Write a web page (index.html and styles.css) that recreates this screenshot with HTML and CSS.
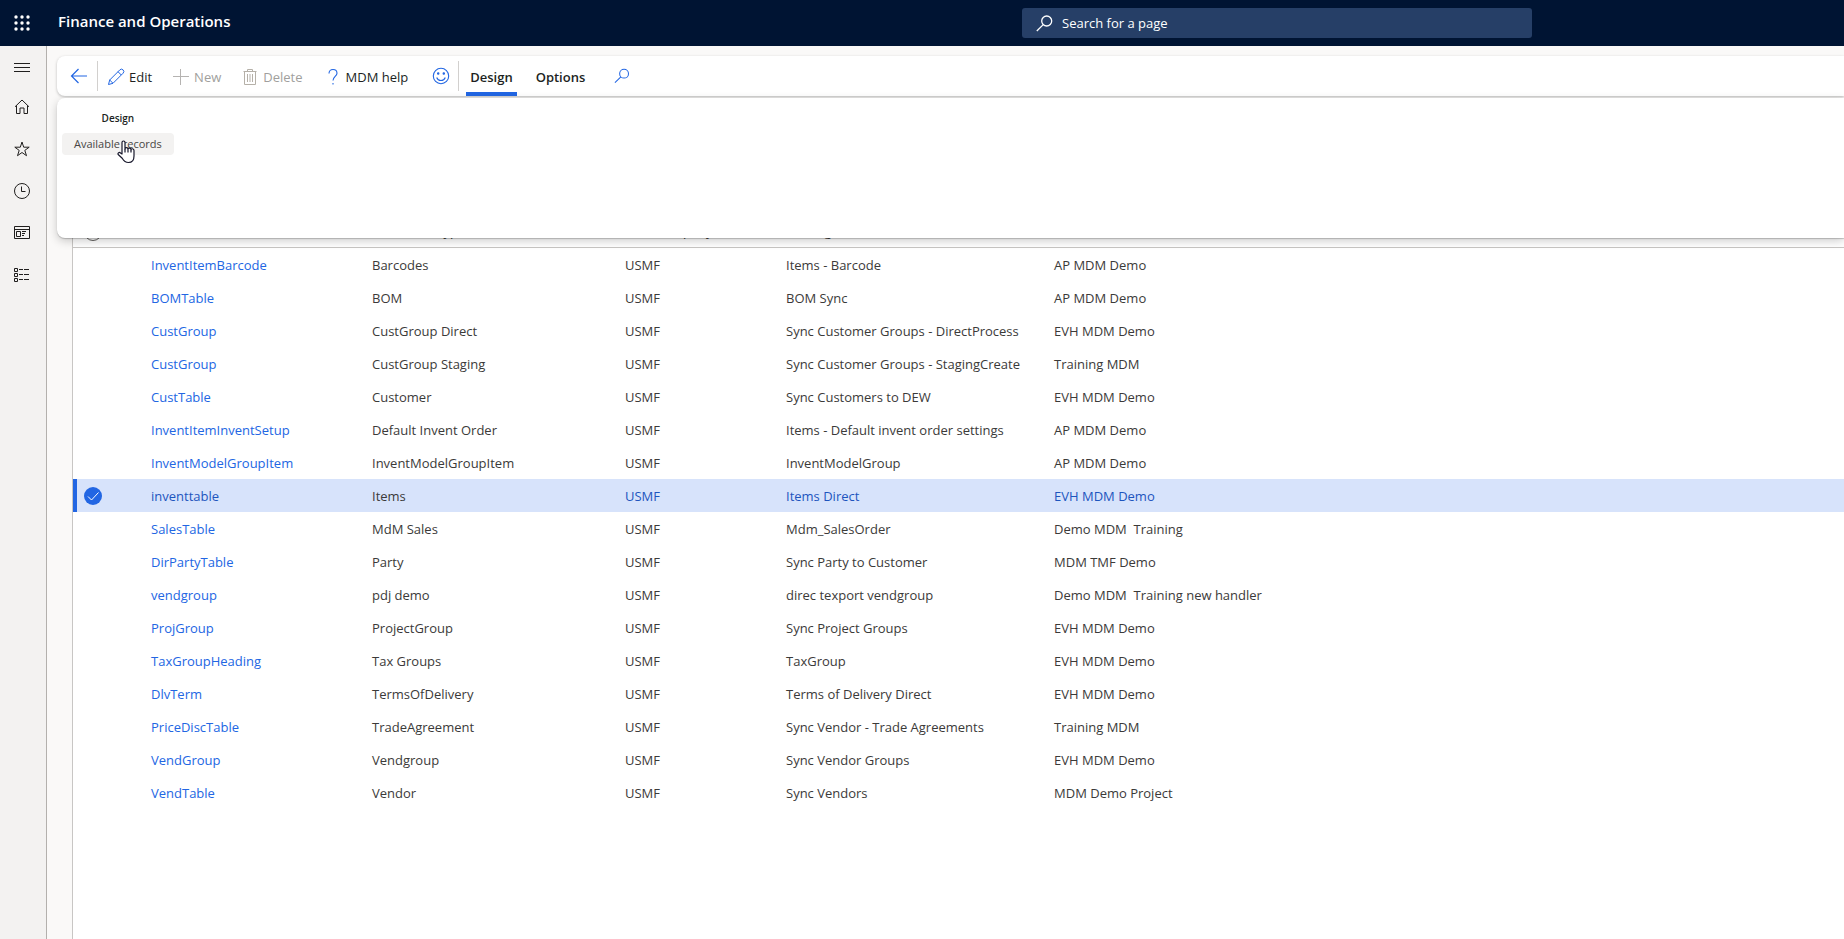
FILE: index.html
```html
<!DOCTYPE html>
<html lang="en">
<head>
<meta charset="utf-8">
<title>Finance and Operations</title>
<link rel="stylesheet" href="styles.css">
</head>
<body>
<header class="topbar">
  <button class="icon-button launcher" aria-label="App launcher">
    <svg width="16" height="16" viewBox="0 0 16 16" fill="currentColor"><circle cx="2" cy="2" r="1.7"/><circle cx="8" cy="2" r="1.7"/><circle cx="14" cy="2" r="1.7"/><circle cx="2" cy="8" r="1.7"/><circle cx="8" cy="8" r="1.7"/><circle cx="14" cy="8" r="1.7"/><circle cx="2" cy="14" r="1.7"/><circle cx="8" cy="14" r="1.7"/><circle cx="14" cy="14" r="1.7"/></svg>
  </button>
  <h1 class="brand">Finance and Operations</h1>
  <label class="search">
    <svg width="17" height="17" viewBox="0 0 17 17" fill="none" stroke="currentColor" stroke-width="1.3"><circle cx="10.7" cy="6" r="5"/><path d="M7.2 9.6L.8 16"/></svg>
    <input class="search-input" type="text" placeholder="Search for a page" aria-label="Search for a page">
  </label>
</header>
<div class="shell">
  <nav class="rail">
    <button class="icon-button menu" aria-label="Expand the navigation pane"><svg width="18" height="18" viewBox="0 0 18 18" fill="none" stroke="currentColor"><path d="M1 6.5h16M1 10.5h16M1 14.5h16"/></svg></button>
    <button class="icon-button" aria-label="Home"><svg width="18" height="18" viewBox="0 0 18 18" fill="none" stroke="currentColor"><path d="M2 8.8L9 2l7 6.800M3.500 7.500v8h3.500v-5.500h4v5.500h3.500v-8"/></svg></button>
    <button class="icon-button" aria-label="Favorites"><svg width="18" height="18" viewBox="0 0 18 18" fill="none" stroke="currentColor"><path d="M9 2l1.700 5.200h5.500l-4.400 3.200 1.700 5.300L9 12.500l-4.500 3.200 1.700-5.300-4.400-3.200h5.500z"/></svg></button>
    <button class="icon-button" aria-label="Recent"><svg width="18" height="18" viewBox="0 0 18 18" fill="none" stroke="currentColor"><circle cx="9" cy="9" r="7.500"/><path d="M8.500 4.500v5h4"/></svg></button>
    <button class="icon-button" aria-label="Workspaces"><svg width="18" height="18" viewBox="0 0 18 18" fill="none" stroke="currentColor"><path d="M1.500 2.500h15v12h-15zM1.500 5.500h15M3.500 7.500h4v5h-4zM9 7.500h4M9 9.500h3M9 11.500h2"/></svg></button>
    <button class="icon-button" aria-label="Modules"><svg width="18" height="18" viewBox="0 0 18 18" fill="none" stroke="currentColor"><path d="M1.500 2.500h3v3h-3zM1.500 7.500h3v3h-3zM1.500 12.500h3v3h-3zM6 3.500h4M11 3.500h5M6 8.500h4M11 8.500h5M6 13.500h4M11 13.500h5"/></svg></button>
  </nav>
  <main class="content">
    <div class="toolbar">
      <button class="tool back" aria-label="Back"><svg width="18" height="18" viewBox="0 0 18 18" fill="none" stroke="currentColor" stroke-width="1.200"><path d="M17 9H1.500M8.500 2L1.500 9l7 7"/></svg></button>
      <span class="divider"></span>
      <button class="tool edit"><svg width="18" height="18" viewBox="0 0 18 18" fill="none" stroke="#2266e3"><path d="M1.500 16.500l1.200-4.500L12.800 1.900a1.900 1.900 0 0 1 3.300 3.300L6 15.300zM11 3.700l3.300 3.300M2.700 12L6 15.300"/></svg>Edit</button>
      <button class="tool new" disabled><svg width="18" height="18" viewBox="0 0 18 18" fill="none" stroke="#b5b3b1"><path d="M1 8.500h16M8.500 1v16"/></svg>New</button>
      <button class="tool delete" disabled><svg width="18" height="18" viewBox="0 0 18 18" fill="none" stroke="#b5b0a8"><path d="M2.500 3.500h13M6.500 3.500v-2h5v2M3.500 3.500v13h11v-13M6.500 6v8M9 6v8M11.500 6v8"/></svg>Delete</button>
      <button class="tool help"><svg width="18" height="18" viewBox="0 0 18 18" fill="none" stroke="#2266e3" stroke-width="1.100"><path d="M5 5.500C5 3 6.500 1.500 9 1.500s4 1.500 4 3.700c0 3-4 3.600-4 7.300M9 15v1.500"/></svg>MDM help</button>
      <button class="tool smile" aria-label="Feedback"><svg width="18" height="18" viewBox="0 0 18 18" fill="none" stroke="#2266e3" stroke-width="1.100"><circle cx="9" cy="9" r="7.700"/><path d="M4.700 10.500c1.500 4 7 4 8.600 0"/><circle cx="6.200" cy="6.500" r=".7" fill="#2266e3"/><circle cx="11.800" cy="6.500" r=".7" fill="#2266e3"/></svg></button>
      <span class="divider"></span>
      <button class="tab active">Design</button>
      <button class="tab">Options</button>
      <button class="tool find" aria-label="Find an action"><svg width="16" height="16" viewBox="0 0 17 17" fill="none" stroke="#2266e3" stroke-width="1.100"><circle cx="10.700" cy="6" r="4.700"/><path d="M7.300 9.500L1 15.500"/></svg></button>
    </div>
    <section class="flyout">
      <div class="group">
        <h2 class="group-title">Design</h2>
        <button class="group-action">Available records</button>
        <svg class="pointer" width="20" height="24" viewBox="0 0 20 24" fill="#fff" stroke="#16162a" stroke-width="1.200" stroke-linejoin="round"><path d="M5 14V2.500C5 .5 8 .5 8 2.500V9c0-1.800 3-1.800 3 .3 0-1.800 3-1.600 3 .5 0-1.600 3-1.400 3 .8V16c0 4-2 6.500-5.500 6.500-3.500 0-4.800-1.600-6.300-4.200L1.200 14.500c-.8-1.700 1.200-2.700 2.300-1.500z"/><path d="M8 9v3.500M11 9.500v3M14 10v2.500"/></svg>
      </div>
    </section>
    <div class="grid-area">
      <table class="grid">
        <colgroup><col class="c-mark"><col class="c-table"><col class="c-type"><col class="c-company"><col class="c-message"><col></colgroup>
        <thead><tr><th><span class="ring"></span></th><th>Table</th><th>Document type</th><th>Data company</th><th>Message</th><th></th></tr></thead>
        <tbody>
          <tr><td></td><td><a href="#">InventItemBarcode</a></td><td>Barcodes</td><td>USMF</td><td>Items - Barcode</td><td>AP MDM Demo</td></tr>
          <tr><td></td><td><a href="#">BOMTable</a></td><td>BOM</td><td>USMF</td><td>BOM Sync</td><td>AP MDM Demo</td></tr>
          <tr><td></td><td><a href="#">CustGroup</a></td><td>CustGroup Direct</td><td>USMF</td><td>Sync Customer Groups - DirectProcess</td><td>EVH MDM Demo</td></tr>
          <tr><td></td><td><a href="#">CustGroup</a></td><td>CustGroup Staging</td><td>USMF</td><td>Sync Customer Groups - StagingCreate</td><td>Training MDM</td></tr>
          <tr><td></td><td><a href="#">CustTable</a></td><td>Customer</td><td>USMF</td><td>Sync Customers to DEW</td><td>EVH MDM Demo</td></tr>
          <tr><td></td><td><a href="#">InventItemInventSetup</a></td><td>Default Invent Order</td><td>USMF</td><td>Items - Default invent order settings</td><td>AP MDM Demo</td></tr>
          <tr><td></td><td><a href="#">InventModelGroupItem</a></td><td>InventModelGroupItem</td><td>USMF</td><td>InventModelGroup</td><td>AP MDM Demo</td></tr>
          <tr class="selected"><td><svg class="check" width="18" height="18" viewBox="0 0 18 18" fill="none"><circle cx="9" cy="9" r="9" fill="#2266e3"/><path d="M4 9.500l3.500 3.500L14.500 5.500" stroke="#fff"/></svg></td><td><a href="#">inventtable</a></td><td>Items</td><td><a href="#">USMF</a></td><td><a href="#">Items Direct</a></td><td><a href="#">EVH MDM Demo</a></td></tr>
          <tr><td></td><td><a href="#">SalesTable</a></td><td>MdM Sales</td><td>USMF</td><td>Mdm_SalesOrder</td><td>Demo MDM  Training</td></tr>
          <tr><td></td><td><a href="#">DirPartyTable</a></td><td>Party</td><td>USMF</td><td>Sync Party to Customer</td><td>MDM TMF Demo</td></tr>
          <tr><td></td><td><a href="#">vendgroup</a></td><td>pdj demo</td><td>USMF</td><td>direc texport vendgroup</td><td>Demo MDM  Training new handler</td></tr>
          <tr><td></td><td><a href="#">ProjGroup</a></td><td>ProjectGroup</td><td>USMF</td><td>Sync Project Groups</td><td>EVH MDM Demo</td></tr>
          <tr><td></td><td><a href="#">TaxGroupHeading</a></td><td>Tax Groups</td><td>USMF</td><td>TaxGroup</td><td>EVH MDM Demo</td></tr>
          <tr><td></td><td><a href="#">DlvTerm</a></td><td>TermsOfDelivery</td><td>USMF</td><td>Terms of Delivery Direct</td><td>EVH MDM Demo</td></tr>
          <tr><td></td><td><a href="#">PriceDiscTable</a></td><td>TradeAgreement</td><td>USMF</td><td>Sync Vendor - Trade Agreements</td><td>Training MDM</td></tr>
          <tr><td></td><td><a href="#">VendGroup</a></td><td>Vendgroup</td><td>USMF</td><td>Sync Vendor Groups</td><td>EVH MDM Demo</td></tr>
          <tr><td></td><td><a href="#">VendTable</a></td><td>Vendor</td><td>USMF</td><td>Sync Vendors</td><td>MDM Demo Project</td></tr>
        </tbody>
      </table>
    </div>
  </main>
</div>
</body>
</html>
```

FILE: styles.css
```css
* { box-sizing: border-box; }

body {
  margin: 0;
  min-height: 100vh;
  display: flex;
  flex-direction: column;
  background: #faf9f8;
  color: #3b3a39;
  font: 13px/20px "Segoe UI", "Open Sans", "Noto Sans", sans-serif;
}

button, input { font: inherit; color: inherit; }

button {
  display: flex;
  align-items: center;
  padding: 0;
  border: 0;
  background: none;
  white-space: nowrap;
}

svg { display: block; flex: none; }

.topbar {
  display: grid;
  grid-template-columns: 44px 964px minmax(200px, 524px);
  align-items: center;
  height: 46px;
  background: #001433;
  color: #fff;
}

.icon-button { justify-content: center; width: 44px; height: 42px; }
.menu { height: 40px; }

.brand { margin: 0 0 4px; padding-left: 14px; font-size: 15px; font-weight: 600; }

.search {
  display: flex;
  align-items: center;
  gap: 9px;
  height: 30px;
  margin-left: 14px;
  padding: 0 14px;
  border-radius: 3px;
  background: #263f67;
}

.search-input {
  flex: 1;
  min-width: 0;
  padding: 0;
  border: 0;
  outline: 0;
  background: none;
}

.search-input::placeholder { color: #fff; opacity: 1; }

.shell { flex: 1; display: flex; }

.rail {
  flex: none;
  width: 47px;
  border-right: 1px solid #b3b0ad;
  background: #f3f2f1;
  color: #201f1e;
}

.content {
  position: relative;
  flex: 1;
  min-width: 0;
  display: flex;
  flex-direction: column;
  overflow: hidden;
  padding: 10px 0 0 10px;
}

.toolbar {
  display: flex;
  align-items: center;
  height: 40px;
  border-radius: 8px 0 0 8px;
  background: #fff;
  box-shadow: 0 1px 3px rgba(0, 0, 0, .25);
  color: #201f1e;
}

.tool { gap: 4px; height: 40px; padding-top: 2px; }
.tool:disabled { color: #a19f9d; }
.back { margin: 0 9px 0 13px; padding-top: 0; color: #2266e3; }
.divider { width: 1px; height: 30px; background: #d2d0ce; }
.edit { margin-left: 9px; }
.new, .delete { margin-left: 20px; }
.help { margin-left: 21px; }
.smile { margin: 0 8px 0 24px; padding-top: 0; }

.tab {
  height: 40px;
  margin-left: 7px;
  padding: 6px 4px 0;
  border-bottom: 4px solid transparent;
  font-weight: 600;
}

.tab + .tab { margin-left: 15px; }
.tab.active { border-color: #2266e3; }
.find { margin-left: 25px; padding-top: 0; }

.flyout {
  position: absolute;
  top: 52px;
  left: 10px;
  right: 0;
  height: 140px;
  padding: 12px 5px;
  border-radius: 8px 0 0 8px;
  background: #fff;
  box-shadow: 0 1px 1px rgba(0, 0, 0, .2), 0 3px 10px rgba(0, 0, 0, .2);
}

.group { position: relative; width: max-content; }

.group-title {
  margin: 0 0 7px;
  font-size: 10px;
  line-height: 16px;
  font-weight: 600;
  text-align: center;
  color: #201f1e;
}

.group-action {
  height: 22px;
  padding: 0 12px;
  border-radius: 4px;
  background: #f3f2f1;
  font-size: 11px;
  color: #484644;
}

.pointer { position: absolute; top: 30px; left: 55px; }

.grid-area {
  flex: 1;
  margin: 111px 0 0 15px;
  border-left: 1px solid #c8c6c4;
  background: #fff;
}

.grid {
  width: 100%;
  table-layout: fixed;
  border-spacing: 0;
}

.grid th, .grid td {
  height: 33px;
  padding: 0;
  text-align: left;
  white-space: pre;
}

.grid th {
  height: 41px;
  padding-bottom: 6px;
  border-bottom: 1px solid #c8c6c4;
  font-weight: 400;
  vertical-align: bottom;
}

.c-mark { width: 78px; }
.c-table { width: 221px; }
.c-type { width: 253px; }
.c-company { width: 161px; }
.c-message { width: 268px; }

.grid a { color: #2266e3; text-decoration: none; }
.selected { background: #d7e3fb; }
.selected td:first-child { box-shadow: inset 4px 0 #2266e3; }
.grid .selected a { color: #1d55be; }
.check { margin-left: 11px; }

.ring {
  display: block;
  width: 18px;
  height: 18px;
  margin-left: 11px;
  border: 1px solid #605e5c;
  border-radius: 50%;
}
```
